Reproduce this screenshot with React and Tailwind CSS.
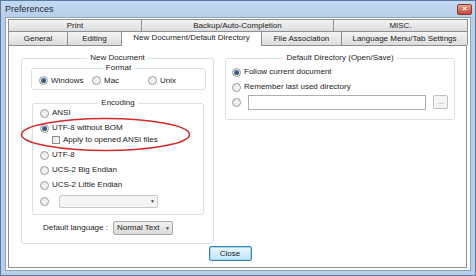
import React from 'react';

const font = { fontFamily: '"Liberation Sans", Arial, sans-serif' };

const Radio = ({ checked }) => (
    <span className="w-[9px] h-[9px] rounded-full border border-[#9a9a9a] bg-gradient-to-br from-[#e8e8e8] to-[#f8f8f8] flex items-center justify-center shrink-0">
        {checked && <span className="w-[5px] h-[5px] rounded-full bg-gradient-to-br from-[#5b7fb0] to-[#243c66]" />}
    </span>
);

const RadioRow = ({ checked, label, className = '' }) => (
    <div className={`flex items-center gap-[3px] ${className}`}>
        <Radio checked={checked} />
        {label && <span>{label}</span>}
    </div>
);

const Group = ({ title, className = '', children }) => (
    <fieldset className={`border border-[#dcdfe2] rounded-[3px] ${className}`}>
        <legend className="mx-auto px-[3px] leading-[10px]">{title}</legend>
        {children}
    </fieldset>
);

const Tab = ({ label, w, className = '' }) => (
    <div className={`${w} h-full border-t border-l border-r border-[#8c8f96] bg-gradient-to-b from-[#f4f4f4] to-[#dcdcdc] flex items-center justify-center -mr-px ${className}`}>
        {label}
    </div>
);

const Combo = ({ text, className = '' }) => (
    <div className={`border border-[#a8a8a8] rounded-[2px] flex items-center ${className}`}>
        <span className="flex-1 pl-[3px]">{text}</span>
        <span className="w-[9px] flex items-center justify-center text-[5px] text-[#444]">▼</span>
    </div>
);

export default function App() {
    return (
        <div style={font} className="w-[476px] h-[276px] bg-[#b8cfe9] border border-[#5b7aa3] flex flex-col text-[8px] text-[#1c1c1c] leading-none">
            {/* title bar */}
            <div className="h-[16px] flex items-center justify-between pl-[4px] pr-[3px] bg-gradient-to-b from-[#c4d9f1] to-[#b8cfe9]">
                <span className="text-[9px] text-[#1a2a3a]">Preferences</span>
                <span className="w-[15px] h-[11px] rounded-[2px] border border-[#8a3a2a] bg-gradient-to-b from-[#e8a090] to-[#c8443a] text-white text-[8px] font-bold flex items-center justify-center">×</span>
            </div>

            <div className="flex-1 mx-[4px] mb-[4px] border border-[#8fa3bb] bg-white p-px flex flex-col">
                {/* tabs */}
                <div className="h-[12px] flex pl-px">
                    <Tab label="Print" w="w-[134px]" />
                    <Tab label="Backup/Auto-Completion" w="w-[193px]" />
                    <Tab label="MISC." w="w-[135px]" />
                </div>
                <div className="h-[14px] flex pl-px items-end relative z-10">
                    <Tab label="General" w="w-[60px]" />
                    <Tab label="Editing" w="w-[55px]" />
                    <div className="w-[141px] h-[15px] border-t border-l border-r border-[#8c8f96] bg-white flex items-center justify-center -mr-px -mb-px pb-[2px]">
                        New Document/Default Directory
                    </div>
                    <Tab label="File Association" w="w-[81px]" />
                    <Tab label="Language Menu/Tab Settings" w="w-[127px]" />
                </div>

                {/* panel */}
                <div className="flex-1 ml-px mr-[2px] mb-[1px] border border-[#8c8f96] bg-white relative flex flex-col">
                    <div className="flex gap-[11px] pl-[12px] pt-[7px]">
                        {/* left */}
                        <Group title="New Document" className="w-[193px] h-[191px] pb-[5px]">
                            <Group title="Format" className="ml-[9px] mr-[7px] h-[27px]">
                                <div className="flex items-center pl-[7px] pt-[3px]">
                                    <RadioRow checked label="Windows" className="w-[53px]" />
                                    <RadioRow label="Mac" className="w-[56px]" />
                                    <RadioRow label="Unix" />
                                </div>
                            </Group>
                            <Group title="Encoding" className="ml-[10px] mr-[9px] mt-[8px] h-[117px]">
                                <div className="flex flex-col pl-[7px] -mt-px">
                                    <RadioRow label="ANSI" className="h-[12px]" />
                                    <RadioRow checked label="UTF-8 without BOM" className="h-[12px] mt-[3px]" />
                                    <div className="flex items-center gap-[3px] h-[12px] pl-[12px]">
                                        <span className="w-[8px] h-[8px] border border-[#8f8f8f] bg-gradient-to-br from-[#e4e4e4] to-[#fafafa]" />
                                        <span>Apply to opened ANSI files</span>
                                    </div>
                                    <RadioRow label="UTF-8" className="h-[12px] mt-[3px]" />
                                    <RadioRow label="UCS-2 Big Endian" className="h-[12px] mt-[3px]" />
                                    <RadioRow label="UCS-2 Little Endian" className="h-[12px] mt-[3px]" />
                                    <div className="flex items-center gap-[10px] h-[14px] mt-[3px]">
                                        <Radio />
                                        <Combo className="w-[99px] h-[13px] bg-[#f4f4f4] border-[#c8c8c8] text-[#999]" />
                                    </div>
                                </div>
                            </Group>
                            <div className="flex items-center pl-[21px] mt-[6px] gap-[5px]">
                                <span>Default language :</span>
                                <Combo text="Normal Text" className="w-[60px] h-[14px] bg-gradient-to-b from-[#f2f2f2] to-[#dadada] border-[#7a7a7a]" />
                            </div>
                        </Group>

                        {/* right */}
                        <Group title="Default Directory (Open/Save)" className="w-[230px] h-[67px]">
                            <div className="flex flex-col pl-[6px] pt-[3px]">
                                <RadioRow checked label="Follow current document" className="h-[12px]" />
                                <RadioRow label="Remember last used directory" className="h-[12px] mt-[3px]" />
                                <div className="flex items-center h-[16px] mt-[1px]">
                                    <Radio />
                                    <div className="w-[178px] h-[15px] border border-[#abadb3] ml-[7px]" />
                                    <div className="w-[15px] h-[14px] border border-[#c0c0c0] rounded-[2px] ml-[7px] bg-[#f4f4f4] text-[#999] flex items-center justify-center">...</div>
                                </div>
                            </div>
                        </Group>
                    </div>

                    <div className="flex justify-center mt-auto mb-[6px] pr-[15px]">
                        <div className="w-[43px] h-[15px] rounded-[2px] border border-[#3c7fb1] bg-gradient-to-b from-[#eaf6fd] to-[#bee6fd] shadow-[inset_0_0_0_1px_#9fd6f5] flex items-center justify-center">
                            Close
                        </div>
                    </div>

                    <svg className="absolute left-[11px] top-[71px]" width="171" height="35" viewBox="0 0 171 35">
                        <ellipse cx="85.5" cy="17.5" rx="84" ry="16" fill="none" stroke="#d42a2a" strokeWidth="1.6" />
                    </svg>
                </div>
            </div>
        </div>
    );
}
